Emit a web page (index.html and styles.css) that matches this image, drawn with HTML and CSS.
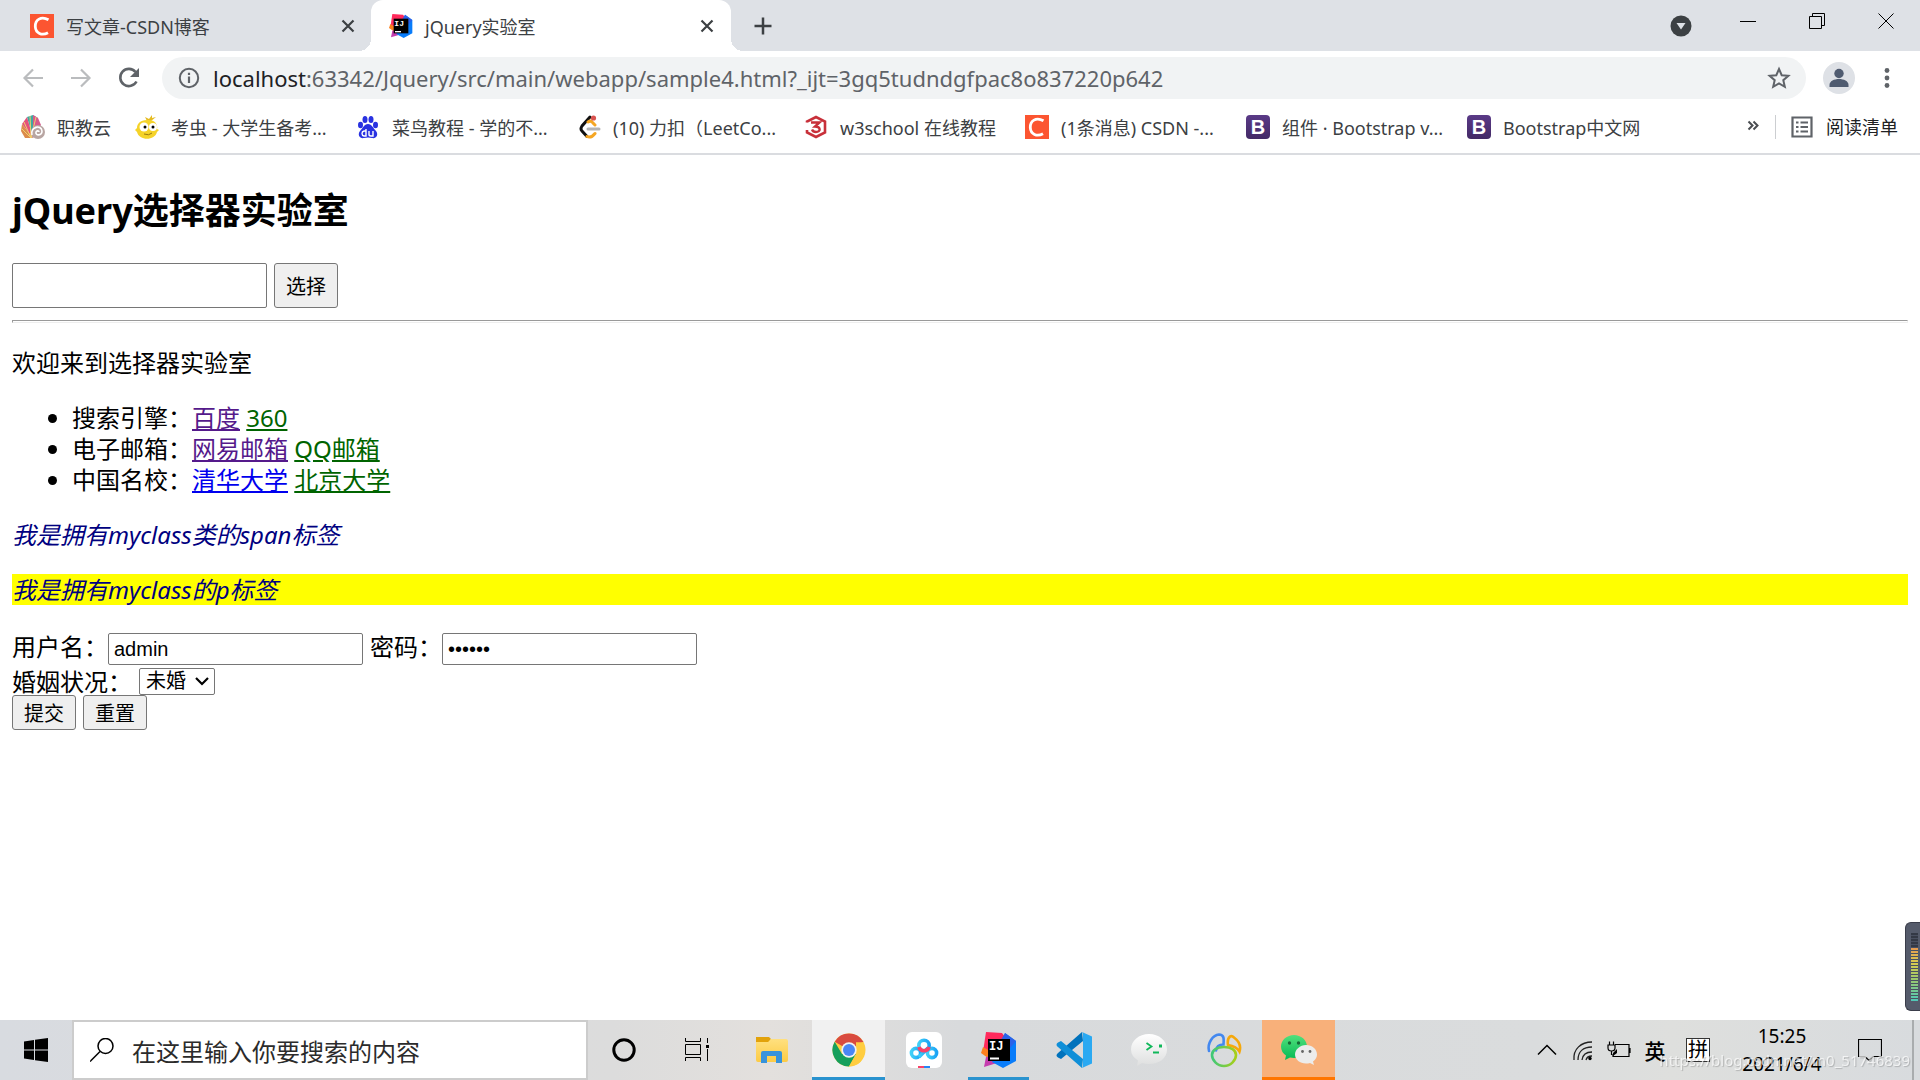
FILE: index.html
```html
<!DOCTYPE html>
<html lang="zh-CN">
<head>
<meta charset="utf-8">
<title>jQuery实验室</title>
<link rel="stylesheet" href="styles.css">
</head>
<body>
<svg class="defs" aria-hidden="true">
  <defs>
    <linearGradient id="gb" x1="0" y1="0" x2="0" y2="1"><stop offset="0" stop-color="#5a3a87"/><stop offset="1" stop-color="#432a66"/></linearGradient>
    <linearGradient id="gf" x1="0" y1="0" x2="0" y2="1"><stop offset="0" stop-color="#ffe07f"/><stop offset="1" stop-color="#fccb45"/></linearGradient>
    <linearGradient id="gp" x1="0" y1="0" x2="1" y2="0"><stop offset="0" stop-color="#3fd0f8"/><stop offset="1" stop-color="#1aa3f5"/></linearGradient>
    <linearGradient id="gn" x1="0" y1="0" x2="1" y2="0"><stop offset="0" stop-color="#3fc878"/><stop offset="1" stop-color="#a8cf17"/></linearGradient>
    <linearGradient id="gw" x1="0" y1="0" x2="0" y2="1"><stop offset="0" stop-color="#52e07c"/><stop offset="1" stop-color="#05b955"/></linearGradient>
    <linearGradient id="gg" x1="0" y1="0" x2="0" y2="1"><stop offset="0" stop-color="#fff"/><stop offset="1" stop-color="#dedfdf"/></linearGradient>
    <symbol id="csdn" viewBox="0 0 24 24"><rect width="24" height="24" fill="#fc5531"/><path d="M18.500 5.800C11 1.500 5 6 5.300 12.500C5.600 19.500 12 22 18 18.700" fill="none" stroke="#fff" stroke-width="2.800"/></symbol>
    <symbol id="idea" viewBox="0 0 36 36"><path d="M5 0L21 1L28 10L10 28L2 20Z" fill="#ff2a5c"/><path d="M2 15L9 19L7 26L0 21Z" fill="#fc801d"/><path d="M5 25L20 22L16 31L3 35Z" fill="#c43cae"/><path d="M24 1L35 9V29L22 36L11 30L22 10Z" fill="#087cfa"/><path d="M24 1L35 9L29 16L20 8Z" fill="#2b62e8"/><rect x="7" y="7" width="22" height="22" fill="#000"/><path d="M9 25.500h9v2H9z" fill="#fff"/><text x="8" y="18" font-family="Liberation Mono" font-weight="700" font-size="12" fill="#fff">IJ</text></symbol>
    <symbol id="boot" viewBox="0 0 24 24"><rect width="24" height="24" rx="4" fill="url(#gb)"/><text x="12" y="19" text-anchor="middle" font-family="Liberation Sans" font-weight="700" font-size="20" fill="#fff">B</text></symbol>
    <symbol id="x" viewBox="0 0 24 24"><path d="M6.500 6.500l11 11M17.500 6.500l-11 11" stroke="#3c4043" stroke-width="2.200"/></symbol>
  </defs>
</svg>
<header class="browser">
  <div class="tabs">
    <div class="tab"><svg class="i24"><use href="#csdn"/></svg><span class="tab-title">写文章-CSDN博客</span><button class="plain" aria-label="关闭标签页"><svg class="i24"><use href="#x"/></svg></button></div>
    <div class="tab tab-active"><svg class="i24"><use href="#idea"/></svg><span class="tab-title">jQuery实验室</span><button class="plain" aria-label="关闭标签页"><svg class="i24"><use href="#x"/></svg></button></div>
    <button class="plain new-tab" aria-label="新标签页"><svg class="i24" viewBox="0 0 24 24"><path d="M12 3.500v17M3.500 12h17" stroke="#3c4043" stroke-width="2.500"/></svg></button>
    <div class="window-controls">
      <button class="plain search-tabs" aria-label="搜索标签页"><svg class="i24" viewBox="0 0 24 24"><circle cx="12" cy="12" r="10.500" fill="#3c4043"/><path d="M7.500 9h9L12 15.500z" fill="#dee1e6"/></svg></button>
      <button class="plain" aria-label="最小化"><svg class="i24" viewBox="0 0 24 24"><path d="M4 12.500h16" stroke="#000"/></svg></button>
      <button class="plain" aria-label="还原"><svg class="i24" viewBox="0 0 24 24"><path d="M4.500 7.500h12v12h-12zM7.500 7v-2.500h12v12H17" fill="none" stroke="#000"/></svg></button>
      <button class="plain" aria-label="关闭"><svg class="i24" viewBox="0 0 24 24"><path d="M4.500 4.500l15 15M19.500 4.500l-15 15" stroke="#000"/></svg></button>
    </div>
  </div>
  <div class="toolbar">
    <button class="plain" aria-label="后退"><svg class="i24" viewBox="0 0 24 24"><path d="M22 12H4M12 3.500L3.500 12l8.500 8.500" fill="none" stroke="#babcbe" stroke-width="2.200"/></svg></button>
    <button class="plain" aria-label="前进"><svg class="i24" viewBox="0 0 24 24"><path d="M2 12h18M12 3.500l8.500 8.500L12 20.500" fill="none" stroke="#babcbe" stroke-width="2.200"/></svg></button>
    <button class="plain" aria-label="重新加载"><svg class="i24" viewBox="0 0 24 24"><path d="M19.500 15.500A8.600 8.600 0 1 1 18.500 6" fill="none" stroke="#5f6368" stroke-width="2.600"/><path d="M22 2v9h-9z" fill="#5f6368"/></svg></button>
    <div class="omnibox">
      <svg class="i24" viewBox="0 0 24 24"><circle cx="12" cy="12" r="9.200" fill="none" stroke="#5f6368" stroke-width="2"/><path d="M12 10.500v6.500M12 6.800v2.200" stroke="#5f6368" stroke-width="2.200"/></svg>
      <span class="url"><b>localhost</b>:63342/Jquery/src/main/webapp/sample4.html?_ijt=3gq5tudndgfpac8o837220p642</span>
      <button class="plain" aria-label="为此标签页添加书签"><svg class="i24" viewBox="0 0 24 24"><path d="M12 3l2.700 6.200 6.700.600-5.100 4.400 1.500 6.600L12 17.300l-5.800 3.500 1.500-6.600-5.100-4.400 6.700-.600z" fill="none" stroke="#5f6368" stroke-width="2"/></svg></button>
    </div>
    <button class="plain avatar" aria-label="个人资料"><svg class="i24" viewBox="0 0 24 24"><circle cx="12" cy="7.500" r="4.700" fill="#4f5b70"/><path d="M2.500 21v-2c0-8 19-8 19 0v2z" fill="#4f5b70"/></svg></button>
    <button class="plain" aria-label="菜单"><svg class="i24" viewBox="0 0 24 24" fill="#5f6368"><circle cx="12" cy="4.500" r="2.400"/><circle cx="12" cy="12" r="2.400"/><circle cx="12" cy="19.500" r="2.400"/></svg></button>
  </div>
  <nav class="bookmarks">
    <a class="mark" href="#"><svg class="i24" viewBox="0 0 24 24"><path d="M12 23L6 2l6-2 5 3z" fill="#3fa9a0"/><path d="M12 23L1 9l5-7z" fill="#e5507b"/><path d="M12 23H4L0 16l1-7z" fill="#dc8b4a"/><path d="M12 23L12 0l5 3 3 7z" fill="#d65a8b"/><path d="M10 23L3 7M10 23L9 1M10 23L1 14M10 23L15 2" stroke="#f0d070"/><circle cx="17" cy="17" r="7" fill="#b8a5a2"/><path d="M11 20c-2-8 9-11 10-4c0 5-7 5-6 1c1-2 3-1 3 0" fill="none" stroke="#fff" stroke-width="1.600"/></svg><span>职教云</span></a>
    <a class="mark mark-long" href="#"><svg class="i24" viewBox="0 0 24 24"><path d="M12 6L10 2l4 2 3-4v3l4-1-5 4z" fill="#e5bb20"/><path d="M12 5C21 4 23 11 22 14l2 1-2 2c-2 9-18 9-20 0l-2-2 2-2c0-4 3-8 10-8z" fill="#f5d32a"/><circle cx="9" cy="12" r="4.500" fill="#fff"/><circle cx="18" cy="12" r="4" fill="#fff"/><circle cx="10" cy="12" r="1.500"/><circle cx="18" cy="12" r="1.500"/><path d="M9 19q5 2 8-1" fill="none" stroke="#9b7a10"/></svg><span>考虫 - 大学生备考...</span></a>
    <a class="mark mark-long" href="#"><svg class="i24" viewBox="0 0 24 24" fill="#2932e1"><ellipse cx="4.500" cy="10" rx="2.500" ry="3.300"/><ellipse cx="9" cy="4.500" rx="2.500" ry="3.500"/><ellipse cx="15" cy="4.500" rx="2.500" ry="3.500"/><ellipse cx="19.500" cy="10" rx="2.500" ry="3.300"/><path d="M12 9c4 0 5 4 8 7c3 4 0 8-4 7q-4-1-8 0c-4 1-7-3-4-7c3-3 4-7 8-7z"/><path d="M10 14v7H8q-2-.500-2-2.500T8 16h2M13 16v3.500q0 1.500 2 1.500h2v-5" fill="none" stroke="#fff" stroke-width="1.400"/></svg><span>菜鸟教程 - 学的不...</span></a>
    <a class="mark mark-longer" href="#"><svg class="i24" viewBox="0 0 24 24" fill="none" stroke-width="3" stroke-linecap="round"><path d="M13 2L5 11q-2 3 0 5l5 5.500" stroke="#111"/><path d="M11 7q3-2 5 1l2 2M10 21.500q4 2 8-3" stroke="#f5a623"/><path d="M11 14h11" stroke="#b3b3b3"/><circle cx="16.500" cy="3" r="2.600" fill="#d9534f"/></svg><span>(10) 力扣（LeetCo...</span></a>
    <a class="mark mark-long" href="#"><svg class="i24" viewBox="0 0 24 24" fill="none" stroke="#c8303a"><path d="M3 7.500V6.500l9-4.500 9 4.500v11L12 22l-9-4.500V15" stroke-width="2.600"/><path d="M7 7.500h8.500L11 11.500c6 0 6 5.500 1 5.500q-3 0-4-2.500" stroke-width="2.400"/></svg><span>w3school 在线教程</span></a>
    <a class="mark mark-long" href="#"><svg class="i24"><use href="#csdn"/></svg><span>(1条消息) CSDN -...</span></a>
    <a class="mark mark-long" href="#"><svg class="i24"><use href="#boot"/></svg><span>组件 · Bootstrap v...</span></a>
    <a class="mark" href="#"><svg class="i24"><use href="#boot"/></svg><span>Bootstrap中文网</span></a>
    <div class="mark-end">
      <button class="plain" aria-label="更多书签"><svg class="i24" viewBox="0 0 24 24"><path d="M7.500 6.500l4 4-4 4M12.500 6.500l4 4-4 4" fill="none" stroke="#4a4d51" stroke-width="2"/></svg></button>
      <button class="plain reading"><svg class="i24" viewBox="0 0 24 24"><path d="M2.500 2.500h19v19h-19z" fill="none" stroke="#5f6368" stroke-width="2.200"/><path d="M6 7.500h2.500M10.500 7.500H18M6 12h2.500M10.500 12H18M6 16.500h2.500M10.500 16.500H18" stroke="#5f6368" stroke-width="2"/></svg>阅读清单</button>
    </div>
  </nav>
</header>
<main class="page">
  <h2>jQuery选择器实验室</h2>
  <div class="row"><input class="field field-tall" type="text" aria-label="选择器"><button class="btn btn-tall">选择</button></div>
  <hr>
  <p>欢迎来到选择器实验室</p>
  <ul>
    <li>搜索引擎：<a class="visited" href="#">百度</a> <a class="green" href="#">360</a></li>
    <li>电子邮箱：<a class="visited" href="#">网易邮箱</a> <a class="green" href="#">QQ邮箱</a></li>
    <li>中国名校：<a class="fresh" href="#">清华大学</a> <a class="green" href="#">北京大学</a></li>
  </ul>
  <p><span class="myclass">我是拥有myclass类的span标签</span></p>
  <p class="myclass highlight">我是拥有myclass的p标签</p>
  <form>
    <div class="row row-login"><label>用户名：<input class="field" type="text" value="admin"></label><label>密码：<input class="field" type="password" value="123456"></label></div>
    <div class="row row-select"><label for="marriage">婚姻状况：</label><div class="select"><select id="marriage"><option>未婚</option><option>已婚</option></select><svg viewBox="0 0 16 16"><path d="M2 5l6 6 6-6" fill="none" stroke="#000" stroke-width="2.200"/></svg></div></div>
    <div class="row"><button class="btn" type="submit">提交</button><button class="btn" type="reset">重置</button></div>
  </form>
</main>
<footer class="taskbar">
  <button class="plain start" aria-label="开始"><svg class="i24" viewBox="0 0 24 24"><path d="M0 3.500L10 2v9.500H0zM11 1.800L24 0v11.500H11zM0 12.500h10V22L0 20.500zM11 12.500h13V24l-13-1.800z"/></svg></button>
  <div class="search"><svg class="i24" viewBox="0 0 24 24"><circle cx="15.500" cy="8" r="7.500" fill="none" stroke="#000" stroke-width="1.500"/><path d="M10 13.500L0 23.500" stroke="#000" stroke-width="1.500"/></svg><input type="text" aria-label="搜索" placeholder="在这里输入你要搜索的内容"></div>
  <div class="apps">
    <button class="app plain" aria-label="Cortana"><svg class="i36" viewBox="0 0 36 36"><circle cx="18" cy="18" r="10.200" fill="none" stroke="#000" stroke-width="3"/></svg></button>
    <button class="app plain" aria-label="任务视图"><svg class="i36" viewBox="0 0 36 36" fill="none" stroke="#000"><path d="M6.500 6v3.500h15V6M6.500 12.500h15v10h-15zM6.500 29v-3.500h15V29M28.500 6v5M28.500 17v12"/><path d="M27 13h3v3h-3z" fill="#000" stroke="none"/></svg></button>
    <button class="app plain" aria-label="文件资源管理器"><svg class="i36" viewBox="0 0 36 36"><path d="M2 5h13l2 2-2 3H2z" fill="#e2a20b"/><path d="M2 10h12l3-3h15q2 0 2 2v19q0 2-2 2H4q-2 0-2-2z" fill="url(#gf)"/><path d="M7 31V21q0-2 2-2h17q2 0 2 2v10h-6v-7h-9v7z" fill="#3793dc"/></svg></button>
    <button class="app app-open app-current plain" aria-label="Chrome"><svg class="i36" viewBox="0 0 36 36"><circle cx="18" cy="18" r="16.500" fill="#ffcd40"/><path d="M3.700 9.750A16.500 16.500 0 0 1 32.300 9.750L18 18z" fill="#d94b3f"/><path d="M18 10h14.500L26 5z" fill="#d94b3f"/><path d="M3.700 9.750A16.500 16.500 0 0 0 18 34.500L25 22 11 22z" fill="#159f5c"/><path d="M25 10.300h7.300Q36 18 32 26T18 34.500l7-12.500z" fill="#ffcd40"/><circle cx="18" cy="18" r="7.700" fill="#f1f1f1"/><circle cx="18" cy="18" r="6" fill="#4a86f5"/></svg></button>
    <button class="app plain" aria-label="百度网盘"><svg class="i36" viewBox="0 0 36 36"><rect width="36" height="36" rx="6" fill="#fff"/><g fill="none" stroke="url(#gp)" stroke-width="3.600"><circle cx="10" cy="21" r="4.600"/><circle cx="26" cy="21" r="4.600"/><path d="M13 25l9-9"/><circle cx="18" cy="13.500" r="5.200"/></g><path d="M13 15a5.200 5.200 0 0 0 10 0" fill="none" stroke="#fa4168" stroke-width="3.600"/><path d="M12 34h6v2h-6z" fill="#fa4168"/><path d="M18 34h6v2h-6z" fill="#2486f6"/></svg></button>
    <button class="app app-open app-narrow plain" aria-label="IntelliJ IDEA"><svg class="i36"><use href="#idea"/></svg></button>
    <button class="app plain" aria-label="Visual Studio Code"><svg class="i36" viewBox="0 0 36 36"><path d="M27 9L5 27l-3-1.500q-3-2 0-4.500L26 0z" fill="#0072bc"/><path d="M27 27L5 9l-3 1.500q-3 2 0 4.500L26 36z" fill="#0f8fd8"/><path d="M26 0l10 4.500v27L26 36q1-1 1-3V3q0-2-1-3z" fill="#2aa9f2"/></svg></button>
    <button class="app plain" aria-label="微信开发者工具"><svg class="i36" viewBox="0 0 36 36"><path d="M18 2c10 0 18 6.500 18 15.500S28 32 18 32q-4 0-7-1l-5 3 1-5.500Q0 24 0 17.500C0 8.500 8 2 18 2z" fill="url(#gg)"/><path d="M15.500 11l5 3.500-5 3.500M22 20.500h6" fill="none" stroke="#10b85a" stroke-width="1.800"/><path d="M28 12.500h3v3h-3z" fill="#10b85a"/></svg></button>
    <button class="app plain" aria-label="Navicat"><svg class="i36" viewBox="0 0 36 36" fill="none" stroke-width="2.600" stroke-linecap="round"><path d="M3 19C1 11 7 3 13 2.500c5 0 5 4 4.500 10-5 0-7 2-7.500 6" stroke="#4388ef"/><path d="M22 13q-1-6 2-8.500 2-1 4 1 8 6 5.500 14-3-5-11.500-6.500z" stroke="#f5a80b"/><path d="M18 15c7 0 12 3 12 8s-5 11-12 11S6 28 6 23s5-8 12-8z" stroke="url(#gn)"/></svg></button>
    <button class="app app-alert plain" aria-label="微信"><svg class="i36" viewBox="0 0 36 36"><path d="M13 3c7 0 13 5 13 11.500S20 26 13 26l-4-.500-5 2.500 1-4.500Q0 20 0 14.500C0 8 6 3 13 3z" fill="url(#gw)"/><circle cx="8.500" cy="11" r="1.700" fill="#176b38"/><circle cx="17.500" cy="11" r="1.700" fill="#176b38"/><path d="M25 13c6 0 11 4 11 9.500q0 4-4 7l1 3.500-4-2q-2 .500-4 .500c-6 0-11-4-11-9S19 13 25 13z" fill="#ececec"/><circle cx="21.500" cy="19.500" r="1.400" fill="#666"/><circle cx="29" cy="19.500" r="1.400" fill="#666"/></svg></button>
  </div>
  <div class="tray">
    <svg class="i24" viewBox="0 0 24 24"><path d="M3 16.500l9-9 9 9" fill="none" stroke="#000" stroke-width="1.500"/></svg>
    <svg class="i24" viewBox="0 0 24 24"><g fill="none" stroke="#222" stroke-width="1.300"><path d="M3 22C2 11 10 4 21 4"/><path d="M7 22C7 14 12 9 21 9"/><path d="M11 22q1-8 10-8"/><path d="M15 22q1-4 6-4"/></g><circle cx="19" cy="20.500" r="1.700"/></svg>
    <svg class="i24" viewBox="0 0 24 24"><path d="M8 6.500h14v12H6V16M23 10v5M1 7h7v3q0 3-3.500 3T1 10zM2.500 3.500V7M6.500 3.500V7M4.500 13v4" fill="none" stroke="#000" stroke-width="1.200"/><path d="M6 18v-3l4-4v4z"/></svg>
    <span class="lang">英</span>
    <span class="ime">拼</span>
    <div class="clock"><span>15:25</span><span>2021/6/4</span></div>
    <svg class="i24" viewBox="0 0 24 24"><path d="M.500 1.500h23v17H15l-4 4-4-4H.500z" fill="none" stroke="#000" stroke-width="1.200"/></svg>
    <i class="show-desktop"></i>
  </div>
</footer>
<aside class="meter" aria-hidden="true"><i></i></aside>
<div class="watermark">https://blog.csdn.net/m0_51746839</div>
</body>
</html>
```

FILE: styles.css
```css
* { box-sizing: border-box; }
body {
  margin: 0;
  min-height: 100vh;
  display: flex;
  flex-direction: column;
  background: #fff;
  color: #000;
  font-family: "Noto Sans", "Noto Sans CJK SC", sans-serif;
}
.defs { position: absolute; width: 0; height: 0; }
svg { display: block; flex: none; }
.i24 { width: 24px; height: 24px; }
.i36 { width: 36px; height: 36px; }
.plain {
  display: flex;
  align-items: center;
  justify-content: center;
  padding: 0;
  border: 0;
  background: none;
  color: inherit;
  font: inherit;
}

/* browser chrome */
.browser {
  font-family: "Noto Sans", "Noto Sans CJK SC", sans-serif;
  font-size: 18px;
  color: #3c4043;
  border-bottom: 2px solid #dadce0;
}
.tabs { display: flex; height: 51px; background: #dee1e6; }
.tab {
  display: flex;
  align-items: center;
  gap: 12px;
  width: 360px;
  padding: 0 12px 0 18px;
}
.tab:first-child { width: 371px; padding: 0 11px 0 30px; }
.tab-title { flex: 1; white-space: nowrap; }
.tab-active {
  position: relative;
  background: #fff;
  border-radius: 12px 12px 0 0;
}
.tab-active::before, .tab-active::after {
  content: "";
  position: absolute;
  bottom: 0;
  width: 12px;
  height: 12px;
}
.tab-active::before { right: 100%; background: radial-gradient(circle at 0 0, transparent 12px, #fff 12px); }
.tab-active::after { left: 100%; background: radial-gradient(circle at 100% 0, transparent 12px, #fff 12px); }
.new-tab { margin-left: 20px; }
.window-controls { display: flex; margin-left: auto; height: 42px; }
.window-controls .plain { width: 69px; }
.window-controls .search-tabs { width: 64px; height: 51px; }

.toolbar { display: flex; align-items: center; height: 54px; padding: 0 21px; gap: 24px; }
.omnibox {
  flex: 1;
  display: flex;
  align-items: center;
  gap: 12px;
  height: 42px;
  margin-left: -3px;
  padding: 0 15px;
  border-radius: 21px;
  background: #f1f3f4;
}
.url { flex: 1; font-size: 22px; line-height: 28px; color: #5f6368; white-space: nowrap; }
.url b { font-weight: 400; color: #202124; }
.avatar { width: 32px; height: 32px; margin: 0 -4px 0 -7px; border-radius: 50%; background: #dee1e6; }

.bookmarks { display: flex; align-items: center; gap: 24px; height: 48px; padding: 0 22px 4px 21px; }
.mark {
  display: flex;
  align-items: center;
  gap: 12px;
  color: inherit;
  text-decoration: none;
  white-space: nowrap;
}
.mark-long { width: 197px; }
.mark-longer { width: 203px; }
.mark-end { display: flex; align-items: center; gap: 10px; margin-left: auto; }
.reading { gap: 12px; padding-left: 14px; border-left: 1px solid #ccced1; color: #202124; line-height: 24px; }

/* document */
.page { flex: 1; padding: 0 12px; font-size: 24px; line-height: 31px; }
.page h2 { margin: 32px 0 28px; font-size: 36px; line-height: 48px; }
.page p { margin: 24px 0; }
.page hr { height: 3px; margin: 12px 0 24px; border: 1px solid; border-color: #9a9a9a #eee #eee #9a9a9a; }
.page ul { margin: 24px 0; padding-left: 60px; }
.visited { color: #551a8b; }
.green { color: #006400; }
.fresh { color: #00e; }
.myclass { color: #000080; font-style: italic; }
.highlight { background: #ff0; }
.row { display: flex; align-items: center; gap: 7px; }
.row label { display: flex; align-items: baseline; }
.row-login { height: 38px; }
.row-select { height: 28px; }
.field {
  width: 255px;
  height: 32px;
  padding: 1px 5px;
  border: 1px solid #767676;
  border-radius: 2px;
  background: #fff;
  color: #000;
  font: 20px "Liberation Sans", "Noto Sans CJK SC", sans-serif;
}
.field-tall { height: 45px; }
.btn {
  width: 64px;
  height: 35px;
  padding: 0;
  border: 1px solid #767676;
  border-radius: 3px;
  background: #efefef;
  color: #000;
  font: 20px "Liberation Sans", "Noto Sans CJK SC", sans-serif;
}
.btn-tall { height: 45px; }
.select { display: grid; align-items: center; width: 76px; }
.select select, .select svg { grid-area: 1 / 1; }
.select svg { width: 16px; height: 16px; justify-self: end; margin-right: 5px; pointer-events: none; }
.select select {
  appearance: none;
  width: 76px;
  height: 27px;
  padding: 0 6px;
  border: 1px solid #767676;
  border-radius: 2px;
  background: #fff;
  color: #000;
  font: 20px/24px "Liberation Sans", "Noto Sans CJK SC", sans-serif;
}

/* desktop taskbar */
.taskbar {
  display: flex;
  height: 60px;
  background: linear-gradient(90deg, #d8dbe0 0, #dcdcdc 32%, #e3e0dd 40%, #d8dadc 50%, #dadcdd 80%, #dedfdd 87%, #d8dbde 100%);
}
.start { width: 72px; }
.search {
  display: flex;
  align-items: center;
  gap: 18px;
  width: 516px;
  padding: 0 16px;
  border: 2px solid #ccc;
  background: #fff;
}
.search input {
  flex: 1;
  min-width: 0;
  padding: 0;
  border: 0;
  background: none;
  font: 24px "Noto Sans CJK SC", sans-serif;
}
.search input::placeholder { color: #2b2b2b; opacity: 1; }
.apps { display: flex; gap: 2px; }
.app { width: 73px; border: solid transparent; border-width: 3px 0; }
.app:first-child { width: 72px; }
.app:nth-child(2) { width: 70px; }
.app:nth-child(3) { width: 76px; }
.app-open { border-bottom-color: #2a93cf; }
.app-current { background: #f1f1f1; border-top-color: #f1f1f1; }
.app-narrow { width: 61px; margin: 0 6px; }
.app-alert { background: #f8b07a; border-top-color: #f8b07a; border-bottom-color: #ff7500; }
.tray { display: flex; align-items: center; gap: 12px; margin-left: auto; }
.lang { width: 22px; margin-left: 1px; font-size: 21px; font-weight: 500; text-align: center; }
.ime {
  width: 24px;
  height: 24px;
  margin-left: 8px;
  border: 1px solid #333;
  background: #fff;
  font-size: 20px;
  line-height: 22px;
  text-align: center;
}
.clock { display: flex; flex-direction: column; width: 120px; margin-right: 4px; font-size: 19px; line-height: 28px; text-align: center; }
.show-desktop { align-self: stretch; width: 8px; margin-left: 18px; border-left: 2px solid #a9acae; }

/* overlays */
.meter {
  position: fixed;
  right: 0;
  bottom: 69px;
  width: 15px;
  height: 89px;
  padding: 10px 2px 10px 5px;
  border: 1px solid #3a3d4a;
  border-right: 0;
  border-radius: 6px 0 0 6px;
  background: #555b6b;
}
.meter i {
  display: block;
  height: 68px;
  background:
    repeating-linear-gradient(#0000 0 2px, #4a5060 2px 3px),
    linear-gradient(#343945 0 15px, #e89a50 15px, #d8cc50 30px, #9cc86c 46px, #50c8b8 68px);
}
.watermark {
  position: fixed;
  right: 10px;
  bottom: 9px;
  color: #ffffffb0;
  font-size: 15px;
  line-height: 22px;
  text-shadow: 1px 1px 1px #0003;
  pointer-events: none;
}
```
